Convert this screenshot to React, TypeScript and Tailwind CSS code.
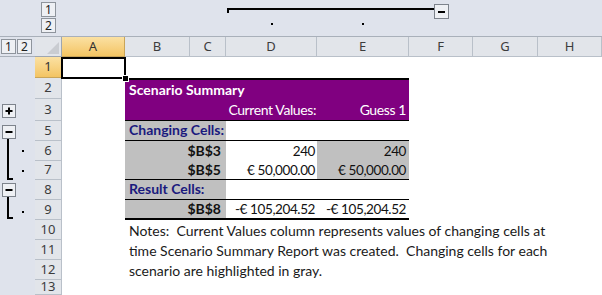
import React from "react";

const cols = ["A", "B", "C", "D", "E", "F", "G", "H"];
const rowNums = ["1", "2", "3", "5", "6", "7", "8", "9", "10", "11", "12", "13"];
const rowStarts = [
  "row-start-3",
  "row-start-4",
  "row-start-5",
  "row-start-6",
  "row-start-7",
  "row-start-8",
  "row-start-9",
  "row-start-10",
  "row-start-11",
  "row-start-12",
  "row-start-13",
  "row-start-14",
];
const colStarts = [
  "col-start-3",
  "col-start-4",
  "col-start-5",
  "col-start-6",
  "col-start-7",
  "col-start-8",
  "col-start-9",
  "col-start-10",
];

function OutlineBtn({ label }: { label: string }) {
  return (
    <div className="w-[15px] h-[15px] border border-[#8e949c] bg-[#eef0f4] flex items-center justify-center text-[12px] leading-none text-[#222]">
      {label}
    </div>
  );
}

const F = "font-['Lato','Liberation_Sans',sans-serif] leading-[18px]";
const REG = `${F} text-[14px]`;
const BOLD = `${F} text-[14px] font-bold`;
const NUM = `${F} text-[13.5px] tracking-[-0.4px] whitespace-nowrap`;

export default function App() {
  return (
    <div className="w-[602px] h-[295px] overflow-hidden bg-white font-['Noto_Sans',sans-serif]">
      <div className="grid grid-cols-[35px_27px_63px_65px_36px_91px_92px_64px_65px_64px] grid-rows-[37px_20px_21px_21px_22px_20px_20px_19px_20px_20px_20px_20px_20px_15px] w-[602px] h-[295px]">
        {/* top outline bar */}
        <div className="col-start-1 row-start-1 bg-[#dfe3ec] border-b border-[#a9b0ba]" />
        <div className="col-start-2 row-start-1 bg-[#dfe3ec] border-b border-[#a9b0ba] flex flex-col items-center pt-[2px] gap-[1px]">
          <OutlineBtn label="1" />
          <OutlineBtn label="2" />
        </div>
        <div className="col-start-3 col-span-8 row-start-1 bg-[#dfe3ec] border-b border-[#a9b0ba]">
          <svg width="540" height="36" viewBox="0 0 540 36">
            <path d="M166 13 V9 H372" stroke="#000" strokeWidth="2" fill="none" />
            <rect x="372.5" y="4.5" width="14" height="14" fill="#eef0f4" stroke="#7d838c" />
            <rect x="376" y="11" width="7" height="2" fill="#000" />
            <rect x="209" y="23" width="2" height="2" fill="#000" />
            <rect x="300" y="23" width="2" height="2" fill="#000" />
          </svg>
        </div>

        {/* left outline area */}
        <div className="col-start-1 row-start-2 bg-[#dfe3ec] border-b border-[#a9b0ba] flex items-center pl-[1px] gap-[1px]">
          <OutlineBtn label="1" />
          <OutlineBtn label="2" />
        </div>
        <div className="col-start-1 row-start-3 row-span-12 bg-[#dfe3ec]">
          <svg width="35" height="238" viewBox="0 0 35 238">
            <rect x="2.5" y="47.5" width="13" height="13" fill="#eef0f4" stroke="#7d838c" />
            <rect x="5.5" y="53" width="7" height="2" fill="#000" />
            <rect x="8" y="50.5" width="2" height="7" fill="#000" />
            <rect x="2.5" y="68.5" width="13" height="13" fill="#eef0f4" stroke="#7d838c" />
            <rect x="5.5" y="74" width="7" height="2" fill="#000" />
            <path d="M8 82 V122 H13" stroke="#000" strokeWidth="2" fill="none" />
            <rect x="22" y="93" width="2" height="2" fill="#000" />
            <rect x="22" y="113" width="2" height="2" fill="#000" />
            <rect x="2.5" y="126.5" width="13" height="13" fill="#eef0f4" stroke="#7d838c" />
            <rect x="5.5" y="132" width="7" height="2" fill="#000" />
            <path d="M8 140 V161 H13" stroke="#000" strokeWidth="2" fill="none" />
            <rect x="22" y="154" width="2" height="2" fill="#000" />
          </svg>
        </div>

        {/* corner */}
        <div className="col-start-2 row-start-2 bg-[#e2e5ea] border-b border-r border-[#9ea6b0] flex items-end justify-end p-[2px]">
          <svg width="12" height="12" viewBox="0 0 12 12">
            <path d="M12 0 L12 12 L0 12 Z" fill="#c9ccd1" />
          </svg>
        </div>

        {/* column headers */}
        {cols.map((c, i) => (
          <div
            key={c}
            className={`${colStarts[i]} row-start-2 flex items-center justify-center text-[13px] border-b border-r ${
              i === 0
                ? "bg-gradient-to-b from-[#fbe1a2] to-[#f3c462] border-[#c9a559] text-[#333]"
                : "bg-[#e2e5ea] border-[#b9c0c9] text-[#3c3c3c]"
            }`}
          >
            {c}
          </div>
        ))}

        {/* row headers */}
        {rowNums.map((r, i) => (
          <div
            key={r}
            className={`col-start-2 ${rowStarts[i]} flex items-center justify-center text-[13px] border-b border-r ${
              i === 0
                ? "bg-gradient-to-b from-[#fbe1a2] to-[#f3c462] border-[#c9a559] text-[#333]"
                : "bg-[#e2e5ea] border-[#b9c0c9] text-[#3c3c3c]"
            }`}
          >
            {r}
          </div>
        ))}

        {/* active cell A1 */}
        <div className="col-start-3 row-start-3 relative z-10">
          <div className="absolute -left-[1px] -right-[1px] top-0 -bottom-[1px] border-2 border-black" />
          <div className="absolute left-[60px] top-[18px] w-[7px] h-[7px] bg-black border border-white" />
        </div>

        {/* Scenario Summary title */}
        <div className={`col-start-4 col-span-4 row-start-4 bg-[#800080] border-t-2 border-black text-white ${BOLD} pl-[4px] flex items-center whitespace-nowrap`}>
          Scenario Summary
        </div>
        {/* row 3 */}
        <div className={`col-start-4 col-span-4 row-start-5 bg-[#800080] border-b border-black text-white ${REG} tracking-[-0.4px] grid grid-cols-[65px_36px_91px_92px] items-end pb-[1px]`}>
          <div />
          <div />
          <div className="text-right pr-[1px] whitespace-nowrap">Current Values:</div>
          <div className="text-right pr-[3px] whitespace-nowrap">Guess 1</div>
        </div>

        {/* row 5 */}
        <div className="col-start-4 col-span-4 row-start-6 border-b border-black grid grid-cols-[101px_91px_92px]">
          <div className={`bg-[#c0c0c0] ${BOLD} text-[#1a1a7e] pl-[4px] flex items-end pb-[1px] whitespace-nowrap`}>Changing Cells:</div>
          <div />
          <div />
        </div>
        {/* row 6 */}
        <div className="col-start-4 col-span-4 row-start-7 grid grid-cols-[101px_91px_92px] text-[#111]">
          <div className={`bg-[#c0c0c0] ${BOLD} flex items-end justify-end pr-[5px] pb-[1px]`}>$B$3</div>
          <div className={`${NUM} flex items-end justify-end pr-[2px] pb-[1px]`}>240</div>
          <div className={`${NUM} bg-[#c0c0c0] flex items-end justify-end pr-[3px] pb-[1px]`}>240</div>
        </div>
        {/* row 7 */}
        <div className="col-start-4 col-span-4 row-start-8 border-b border-black grid grid-cols-[101px_91px_92px] text-[#111]">
          <div className={`bg-[#c0c0c0] ${BOLD} flex items-end justify-end pr-[5px]`}>$B$5</div>
          <div className={`${NUM} flex items-end justify-end pr-[2px]`}>€ 50,000.00</div>
          <div className={`${NUM} bg-[#c0c0c0] flex items-end justify-end pr-[3px]`}>€ 50,000.00</div>
        </div>
        {/* row 8 */}
        <div className="col-start-4 col-span-4 row-start-9 border-b border-black grid grid-cols-[101px_91px_92px]">
          <div className={`bg-[#c0c0c0] ${BOLD} text-[#1a1a7e] pl-[4px] flex items-end pb-[1px] whitespace-nowrap`}>Result Cells:</div>
          <div />
          <div />
        </div>
        {/* row 9 */}
        <div className="col-start-4 col-span-4 row-start-10 border-b-2 border-black grid grid-cols-[101px_91px_92px] text-[#111]">
          <div className={`bg-[#c0c0c0] ${BOLD} flex items-end justify-end pr-[5px]`}>$B$8</div>
          <div className={`${NUM} flex items-end justify-end pr-[2px]`}>-€ 105,204.52</div>
          <div className={`${NUM} flex items-end justify-end pr-[3px]`}>-€ 105,204.52</div>
        </div>

        {/* notes */}
        <div className={`col-start-4 col-span-7 row-start-11 ${REG} text-[#1a1a1a] pl-[4px] flex items-end whitespace-nowrap`}>
          Notes:&nbsp; Current Values column represents values of changing cells at
        </div>
        <div className={`col-start-4 col-span-7 row-start-12 ${REG} text-[#1a1a1a] pl-[4px] flex items-end whitespace-nowrap`}>
          time Scenario Summary Report was created.&nbsp; Changing cells for each
        </div>
        <div className={`col-start-4 col-span-7 row-start-13 ${REG} text-[#1a1a1a] pl-[4px] flex items-end whitespace-nowrap`}>
          scenario are highlighted in gray.
        </div>
      </div>
    </div>
  );
}
